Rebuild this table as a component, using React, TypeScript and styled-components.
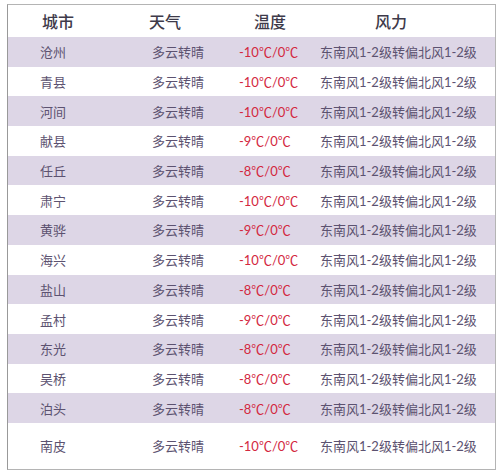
import React from "react";
import styled, { createGlobalStyle } from "styled-components";

const ROWS = [
  { city: "沧州", temp: "-10℃/0℃", shade: true },
  { city: "青县", temp: "-10℃/0℃", shade: false },
  { city: "河间", temp: "-10℃/0℃", shade: true },
  { city: "献县", temp: "-9℃/0℃", shade: false },
  { city: "任丘", temp: "-8℃/0℃", shade: true },
  { city: "肃宁", temp: "-10℃/0℃", shade: false },
  { city: "黄骅", temp: "-9℃/0℃", shade: true },
  { city: "海兴", temp: "-10℃/0℃", shade: false },
  { city: "盐山", temp: "-8℃/0℃", shade: true },
  { city: "孟村", temp: "-9℃/0℃", shade: false },
  { city: "东光", temp: "-8℃/0℃", shade: true },
  { city: "吴桥", temp: "-8℃/0℃", shade: false },
  { city: "泊头", temp: "-8℃/0℃", shade: true },
  { city: "南皮", temp: "-10℃/0℃", shade: false },
];

const WEATHER = "多云转晴";
const WIND = "东南风1-2级转偏北风1-2级";

const GlobalStyle = createGlobalStyle`
  body {
    margin: 0;
    background: #ffffff;
    font-family: "Lato", "Noto Sans CJK SC", sans-serif;
  }
`;

const App = () => {
  return (
    <>
      <GlobalStyle />
      <Table>
        <HeaderRow>
          <HeadCell $pad={34}>城市</HeadCell>
          <HeadCell $pad={4}>天气</HeadCell>
          <HeadCell $pad={21}>温度</HeadCell>
          <HeadCell $pad={62}>风力</HeadCell>
        </HeaderRow>
        {ROWS.map((r, i) => (
          <Row key={r.city} $shade={r.shade} $last={i === ROWS.length - 1}>
            <Cell $pad={32}>{r.city}</Cell>
            <Cell $pad={7}>{WEATHER}</Cell>
            <Temp $pad={6}>{r.temp}</Temp>
            <Cell $pad={7}>{WIND}</Cell>
          </Row>
        ))}
      </Table>
    </>
  );
};

export default App;

const Table = styled.div`
  display: flex;
  flex-direction: column;
  box-sizing: border-box;
  width: 489px;
  height: 466px;
  margin: 4px 0 0 7px;
  border: 1px solid #b4b4b4;
  border-left-color: #999999;
  background: #ffffff;
`;

const HeaderRow = styled.div`
  display: grid;
  grid-template-columns: 137px 88px 80px 1fr;
  align-items: center;
  height: 32px;
  flex-shrink: 0;
`;

const Row = styled.div<{ $shade: boolean; $last: boolean }>`
  display: grid;
  grid-template-columns: 137px 88px 80px 1fr;
  align-items: center;
  height: ${(p) => (p.$last ? "auto" : "29.7px")};
  flex: ${(p) => (p.$last ? "1" : "0 0 auto")};
  background: ${(p) => (p.$shade ? "#ddd6e6" : "#ffffff")};
`;

const HeadCell = styled.div<{ $pad: number }>`
  padding-left: ${(p) => p.$pad}px;
  font-size: 16px;
  font-weight: 500;
  color: #3e3a4a;
  white-space: nowrap;
`;

const Cell = styled.div<{ $pad: number }>`
  padding-left: ${(p) => p.$pad}px;
  font-size: 13px;
  color: #5c5270;
  white-space: nowrap;
`;

const Temp = styled(Cell)`
  color: #d3283f;
`;
